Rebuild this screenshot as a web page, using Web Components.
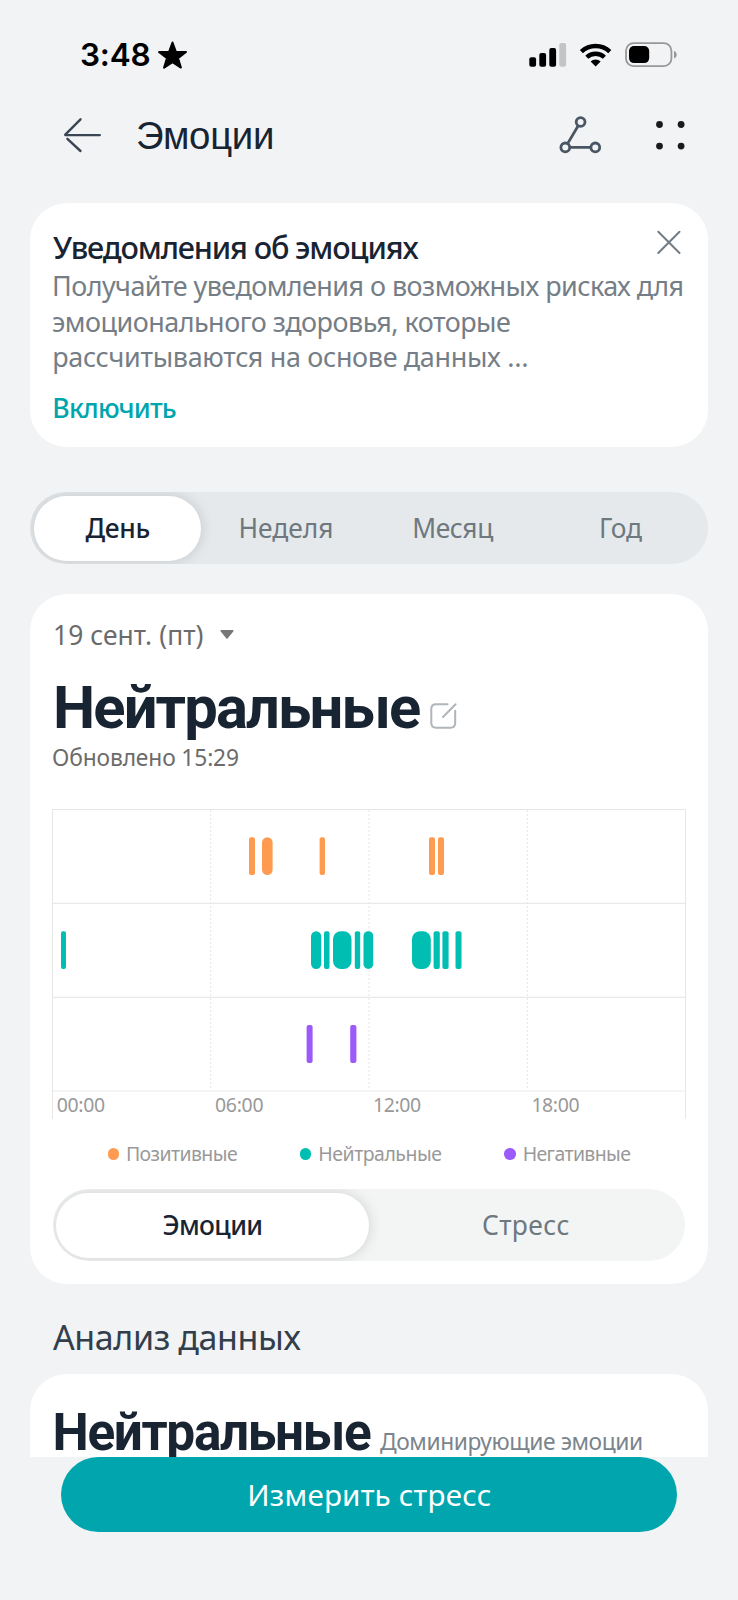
<!DOCTYPE html>
<html lang="ru">
<head>
<meta charset="UTF-8">
<meta name="viewport" content="width=device-width, initial-scale=1">
<title>Эмоции</title>
<style>
  body {
    margin: 0;
    background: #f1f3f5;
    font-family: "Noto Sans", Inter, sans-serif;
    color: #192432;
  }
</style>
</head>
<body>
<emotions-page></emotions-page>

<script>
// One line of text, tracked so that its ink is exactly "w" pixels wide
// and with its capitals centred in the line box
class FitText extends HTMLElement {
  constructor() {
    super();
    this.attachShadow({ mode: "open" });
  }

  connectedCallback() {
    const cap = parseFloat(this.getAttribute("cap") || 14);
    const weight = this.getAttribute("weight") || 400;
    const font = this.getAttribute("font") || "Noto Sans";
    const w = parseFloat(this.getAttribute("w"));
    const text = this.textContent;

    const ctx = document.createElement("canvas").getContext("2d");
    ctx.font = `${weight} 100px "${font}"`;
    const h = ctx.measureText("Н");
    const size = cap / h.actualBoundingBoxAscent * 100;
    const shift = (h.actualBoundingBoxAscent - h.fontBoundingBoxAscent + h.fontBoundingBoxDescent) / 200 * size
      + (font === "Noto Sans" ? 0.8 : 0);

    ctx.font = `${weight} ${size}px "${font}"`;
    const m = ctx.measureText(text);
    const ink = m.actualBoundingBoxLeft + m.actualBoundingBoxRight;
    const spacing = (w - ink) / (text.length - 1);

    this.shadowRoot.innerHTML = `
      <style>
        :host {
          display: block;
          flex: none;
          width: ${w}px;
          padding-left: ${this.getAttribute("x") || 0}px;
          font: ${weight} ${size.toFixed(2)}px/${this.getAttribute("lh") || 30}px "${font}", sans-serif;
          letter-spacing: ${spacing.toFixed(3)}px;
          text-indent: ${m.actualBoundingBoxLeft.toFixed(2)}px;
          color: ${this.getAttribute("color") || "inherit"};
          white-space: nowrap;
          transform: translateY(${shift.toFixed(2)}px);
        }
      </style>
      <slot></slot>
    `;
  }
}

class StatusBar extends HTMLElement {
  constructor() {
    super();
    this.attachShadow({ mode: "open" });
  }

  connectedCallback() {
    this.shadowRoot.innerHTML = `
      <style>
        :host {
          display: flex;
          align-items: center;
          height: 110px;
          padding: 0 60px 0 81px;
          color: #000;
        }
        .star { margin-left: 7.5px; }
        .system { margin-left: auto; }
        svg { display: block; }
      </style>
      <fit-text font="Inter" cap="23" weight="600" w="68.5">3:48</fit-text>
      <svg class="star" width="31" height="30" viewBox="157 39 31 30">
        <path d="M172.5 41.5 175.8 50.7 186 51 178 57.1 180.9 66.6 172.5 61.1 164.1 66.6 167 57.1 159 51 169.2 50.7Z" stroke="#000" stroke-width="2" stroke-linejoin="round"/>
      </svg>
      <svg class="system" width="150" height="30" viewBox="528 40 150 30">
        <rect x="529.3" y="57.3" width="6.8" height="9.4" rx="2"/>
        <rect x="539.3" y="53" width="6.8" height="13.7" rx="2"/>
        <rect x="549.3" y="48" width="6.8" height="18.7" rx="2"/>
        <rect x="559.3" y="43" width="6.8" height="23.7" rx="2" fill="#c3c4c5"/>
        <g fill="none" stroke="#000" stroke-width="4.4">
          <path d="M581.4 51.7A20.5 20.5 0 0 1 609.8 51.7"/>
          <path d="M586.8 57.3A12.6 12.6 0 0 1 604.4 57.3"/>
        </g>
        <path d="M595.6 66.6 590.6 61.4A7.2 7.2 0 0 1 600.6 61.4Z"/>
        <rect x="626" y="43.1" width="45.4" height="23" rx="7.6" fill="none" stroke="#97989a" stroke-width="1.8"/>
        <rect x="629" y="46.1" width="20.2" height="17" rx="5"/>
        <path d="M674 51V58.4C677.6 57.4 677.6 52 674 51Z" fill="#97989a"/>
      </svg>
    `;
  }
}

class AppHeader extends HTMLElement {
  constructor() {
    super();
    this.attachShadow({ mode: "open" });
  }

  connectedCallback() {
    this.shadowRoot.innerHTML = `
      <style>
        :host {
          display: flex;
          align-items: center;
          height: 50px;
          padding: 0 51px 0 62px;
        }
        svg { display: block; }
        .back { margin-right: 35px; }
        .actions { margin-left: auto; }
      </style>
      <svg class="back" width="40" height="40" viewBox="62 115 40 40" fill="none" stroke="#3b4654" stroke-width="2.4" stroke-linecap="round">
        <path d="M80.5 119.3 65.3 134.7M65.3 135.1H99.8M67.4 138.8 80.5 151"/>
      </svg>
      <slot></slot>
      <svg class="actions" width="130" height="50" viewBox="557 110 130 50">
        <g fill="none" stroke="#4a5663" stroke-width="2.8">
          <path d="M577.9 126.3 567.9 143.1M570.1 147.4H590.4"/>
          <circle cx="580.6" cy="122" r="4.4"/>
          <circle cx="565.3" cy="147.4" r="4.4"/>
          <circle cx="595.3" cy="147.4" r="4.4"/>
        </g>
        <g fill="#1a1a1a">
          <circle cx="659.5" cy="124.5" r="3.4"/>
          <circle cx="681.1" cy="124.5" r="3.4"/>
          <circle cx="659.5" cy="146.1" r="3.4"/>
          <circle cx="681.1" cy="146.1" r="3.4"/>
        </g>
      </svg>
    `;
  }
}

class UiCard extends HTMLElement {
  constructor() {
    super();
    this.attachShadow({ mode: "open" });
    this.shadowRoot.innerHTML = `
      <style>
        :host {
          display: block;
          box-sizing: border-box;
          margin: 0 30px;
          background: #fff;
          border-radius: 37px;
        }
      </style>
      <slot></slot>
    `;
  }
}

class NoticeCard extends HTMLElement {
  constructor() {
    super();
    this.attachShadow({ mode: "open" });
  }

  connectedCallback() {
    this.shadowRoot.innerHTML = `
      <style>
        :host { display: block; margin-top: 43px; }
        ui-card { height: 244px; padding: 28px 23px 0; }
        .top { display: flex; justify-content: space-between; padding-right: 3.5px; }
        .body { margin-top: 5px; }
        .link { margin-top: 17.5px; }
        svg { display: block; margin-top: -2px; }
      </style>
      <ui-card>
        <div class="top">
          <fit-text cap="22" weight="500" w="365.5" lh="32">Уведомления об эмоциях</fit-text>
          <svg width="26" height="26" viewBox="0 0 26 26" stroke="#717c85" stroke-width="2" stroke-linecap="round"><path d="M2.3 2.8 23.5 24M23.5 2.8 2.3 24"/></svg>
        </div>
        <div class="body">
          <fit-text cap="19.4" weight="450" color="#757e86" x="1" w="628.5" lh="35.7">Получайте уведомления о возможных рисках для</fit-text>
          <fit-text cap="19.4" weight="450" color="#757e86" w="457" lh="35.7">эмоционального здоровья, которые</fit-text>
          <fit-text cap="19.4" weight="450" color="#757e86" x="1.2" w="473" lh="35.7">рассчитываются на основе данных …</fit-text>
        </div>
        <fit-text class="link" cap="19.2" weight="500" color="#00a5ad" x="1.3" w="121.5">Включить</fit-text>
      </ui-card>
    `;
  }
}

// Pill switch: every child is a tab, the first one is selected
class SegmentBar extends HTMLElement {
  constructor() {
    super();
    this.attachShadow({ mode: "open" });
    this.shadowRoot.innerHTML = `
      <style>
        :host {
          display: grid;
          grid-auto-flow: column;
          grid-auto-columns: 1fr;
          box-sizing: border-box;
          height: 72px;
          padding: 3.5px;
          border-radius: 36px;
          overflow: hidden;
          background: var(--track, #e5e9ec);
        }
        ::slotted(*) {
          display: grid;
          place-items: center;
          border-radius: 33px;
          color: #6e787f;
        }
        ::slotted(:first-child) {
          background: #fff;
          color: #192432;
          box-shadow: 0 0 14px rgba(0, 0, 0, .15);
        }
      </style>
      <slot></slot>
    `;
  }
}

class EmotionChart extends HTMLElement {
  constructor() {
    super();
    this.attachShadow({ mode: "open" });
  }

  // [x, width] of every interval, one list per row
  get rows() {
    return [
      { color: "#ff9b50", bars: [[249, 6], [262, 10.6], [319.6, 5.4], [429, 6], [438, 6]] },
      { color: "#00bfb2", bars: [[61, 5], [311, 10.3], [324, 5.5], [333, 18.5], [354.8, 5.4], [363.5, 9.7], [412, 18.8], [433.6, 6.2], [442.4, 6.2], [455.5, 6]] },
      { color: "#9b5afa", bars: [[306.6, 6], [350.2, 6.2]] }
    ];
  }

  connectedCallback() {
    const bars = this.rows.map((row, i) => row.bars.map(([x, w]) =>
      `<rect x="${x}" y="${837.3 + i * 93.9}" width="${w}" height="37.8" rx="${w < 8 ? 2 : Math.min(w / 2, 8)}" fill="${row.color}"/>`
    ).join("")).join("");

    this.shadowRoot.innerHTML = `
      <style>
        :host {
          display: block;
          box-sizing: border-box;
          width: 634px;
          height: 310px;
          margin-left: -1px;
          border: 1px solid #e6e6e6;
          border-bottom: 0;
        }
        svg { display: block; }
        .axis {
          display: grid;
          grid-template-columns: repeat(4, 158.3px);
          padding-left: 3.7px;
        }
      </style>
      <svg width="632" height="282" viewBox="53 810 632 282">
        <path d="M53 903.4H685M53 997.4H685M53 1091H685" stroke="#e9e9e9" stroke-width="1.1"/>
        <path d="M210.6 810V1090M369.1 810V1090M527.4 810V1090" stroke="#e6e6e6" stroke-dasharray="2 2"/>
        ${bars}
      </svg>
      <div class="axis">
        <fit-text cap="14" color="#999" w="48.4" lh="26">00:00</fit-text>
        <fit-text cap="14" color="#999" w="48.4" lh="26">06:00</fit-text>
        <fit-text cap="14" color="#999" x=".8" w="47" lh="26">12:00</fit-text>
        <fit-text cap="14" color="#999" x=".8" w="47" lh="26">18:00</fit-text>
      </div>
    `;
  }
}

class LegendItem extends HTMLElement {
  constructor() {
    super();
    this.attachShadow({ mode: "open" });
  }

  connectedCallback() {
    this.shadowRoot.innerHTML = `
      <style>
        :host { display: flex; align-items: center; gap: 8px; color: #999; }
        i { width: 11.4px; height: 11.4px; border-radius: 50%; background: ${this.getAttribute("dot")}; }
      </style>
      <i></i><slot></slot>
    `;
  }
}

class DayCard extends HTMLElement {
  constructor() {
    super();
    this.attachShadow({ mode: "open" });
  }

  connectedCallback() {
    this.shadowRoot.innerHTML = `
      <style>
        :host { display: block; margin-top: 30px; }
        ui-card { height: 690px; padding: 26px 23px 0; }
        svg { display: block; }
        .date { display: flex; align-items: center; gap: 16px; padding-left: 2px; }
        .state { display: flex; align-items: flex-end; gap: 10px; margin-top: 26.5px; padding-left: 3px; }
        .state svg { margin-bottom: 6.5px; }
        .updated { margin-top: 9.5px; }
        emotion-chart { margin-top: 39px; }
        .legend { display: flex; gap: 63px; height: 24px; margin-top: 23px; padding-left: 54.5px; }
        segment-bar { --track: #f3f5f5; margin-top: 23px; margin-left: -.5px; }
      </style>
      <ui-card>
        <div class="date">
          <fit-text cap="19" weight="450" color="#6b6b6b" w="147.5">19 сент. (пт)</fit-text>
          <svg width="16" height="12" viewBox="0 0 16 12"><path d="M2.2 1.8H13.8L8 9Z" fill="#777" stroke="#777" stroke-width="1.6" stroke-linejoin="round"/></svg>
        </div>
        <div class="state">
          <fit-text font="Roboto" cap="43" weight="700" w="364" lh="60">Нейтральные</fit-text>
          <svg width="28" height="28" viewBox="0 0 28 28" fill="none" stroke="#b0b5ba" stroke-width="2" stroke-linecap="round">
            <path d="M17.5 2.2H6Q1.3 2.2 1.3 6.9V21Q1.3 25.7 6 25.7H20.5Q25.2 25.7 25.2 21V8.7M13 15 25.6 2.2"/>
          </svg>
        </div>
        <fit-text class="updated" cap="16.4" weight="450" color="#6b6b6b" w="185" lh="24">Обновлено 15:29</fit-text>
        <emotion-chart></emotion-chart>
        <div class="legend">
          <legend-item dot="#ff9b50"><fit-text w="110" lh="24">Позитивные</fit-text></legend-item>
          <legend-item dot="#00bfb2"><fit-text w="122" lh="24">Нейтральные</fit-text></legend-item>
          <legend-item dot="#9b5afa"><fit-text w="106.5" lh="24">Негативные</fit-text></legend-item>
        </div>
        <segment-bar>
          <div><fit-text cap="19" weight="500" w="98">Эмоции</fit-text></div>
          <div><fit-text cap="19" weight="450" x="1" w="85.5">Стресс</fit-text></div>
        </segment-bar>
      </ui-card>
    `;
  }
}

class ActionButton extends HTMLElement {
  constructor() {
    super();
    this.attachShadow({ mode: "open" });
    this.shadowRoot.innerHTML = `
      <style>
        :host { display: block; position: relative; height: 143px; background: #f1f3f5; }
        button {
          display: grid;
          place-items: center;
          width: 616px;
          height: 75px;
          margin: 0 auto;
          padding: 0 0 0 1px;
          border: 0;
          border-radius: 38px;
          background: #00a5ae;
          color: #fff;
        }
      </style>
      <button><slot></slot></button>
    `;
  }
}

class EmotionsPage extends HTMLElement {
  constructor() {
    super();
    this.attachShadow({ mode: "open" });
  }

  connectedCallback() {
    this.shadowRoot.innerHTML = `
      <style>
        :host { display: block; width: 738px; height: 1600px; overflow: hidden; }
        .period { margin: 45px 30px 0; }
        .section { margin: 35px 0 0 53px; }
        .summary {
          display: flex;
          align-items: flex-start;
          gap: 9px;
          height: 83px;
          margin-top: 19px;
          padding: 32.5px 0 0 25.5px;
          border-radius: 37px 37px 0 0;
        }
        .summary fit-text + fit-text { margin-top: 20.5px; }
      </style>
      <status-bar></status-bar>
      <app-header><fit-text font="Liberation Sans" cap="26.5" w="135" lh="51">Эмоции</fit-text></app-header>
      <notice-card></notice-card>
      <segment-bar class="period">
        <div><fit-text cap="19" weight="500" w="64">День</fit-text></div>
        <div><fit-text cap="19" weight="450" x="1.5" w="91">Неделя</fit-text></div>
        <div><fit-text cap="19" weight="450" x="1.5" w="79">Месяц</fit-text></div>
        <div><fit-text cap="19" weight="450" x="1.5" w="41">Год</fit-text></div>
      </segment-bar>
      <day-card></day-card>
      <fit-text class="section" cap="24.5" weight="450" color="#333e4b" w="248.5" lh="36">Анализ данных</fit-text>
      <ui-card class="summary">
        <fit-text font="Roboto" cap="37" weight="700" w="315.5" lh="50">Нейтральные</fit-text>
        <fit-text cap="16.4" color="#7b848c" w="262" lh="30">Доминирующие эмоции</fit-text>
      </ui-card>
      <action-button><fit-text cap="21.3" weight="450" x="1" w="241.5" lh="40">Измерить стресс</fit-text></action-button>
    `;
  }
}

customElements.define("fit-text", FitText);
customElements.define("status-bar", StatusBar);
customElements.define("app-header", AppHeader);
customElements.define("ui-card", UiCard);
customElements.define("notice-card", NoticeCard);
customElements.define("segment-bar", SegmentBar);
customElements.define("emotion-chart", EmotionChart);
customElements.define("legend-item", LegendItem);
customElements.define("day-card", DayCard);
customElements.define("action-button", ActionButton);
customElements.define("emotions-page", EmotionsPage);
</script>
</body>
</html>
